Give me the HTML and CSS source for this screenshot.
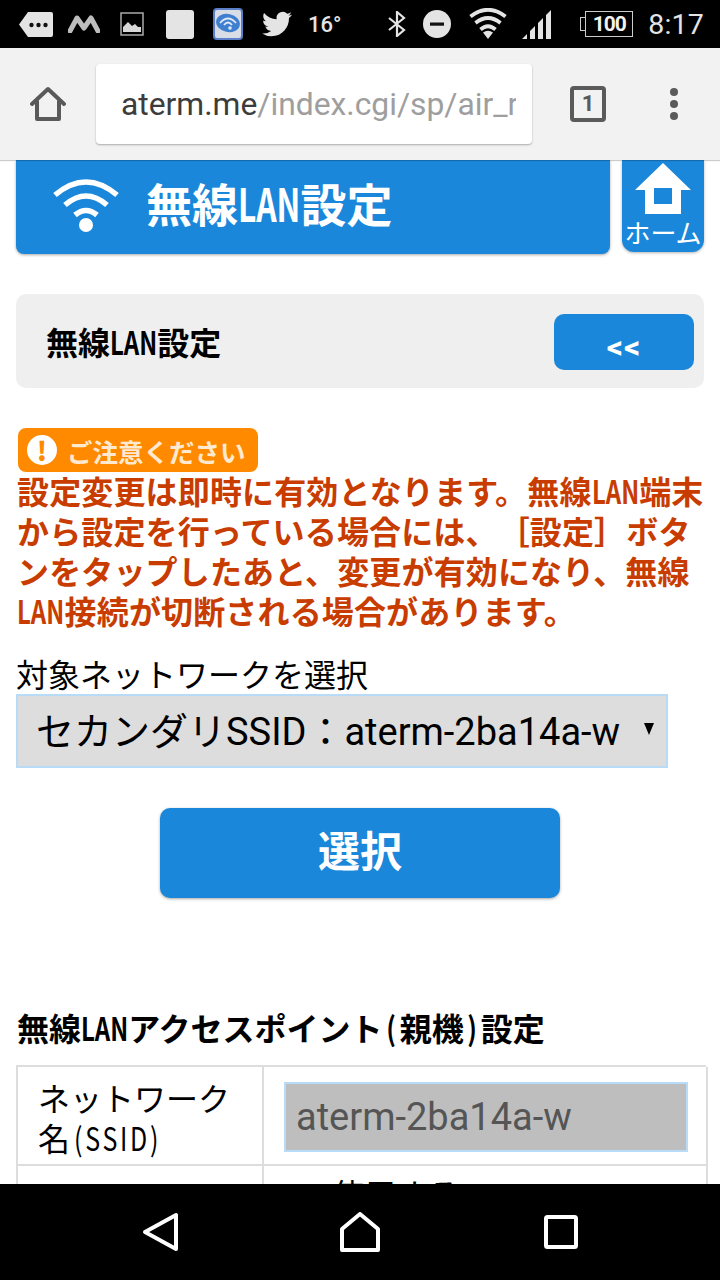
FILE: index.html
```html
<!DOCTYPE html>
<html lang="ja">
<head>
<meta charset="utf-8">
<title>無線LAN設定</title>
<link rel="stylesheet" href="styles.css">
</head>
<body>
<div class="device">
  <header class="status">
    <div class="status-left">
      <svg class="i-more" viewBox="0 0 34 25"><path d="M9 0H32a2 2 0 0 1 2 2V23a2 2 0 0 1-2 2H9L0 12.500Z" fill="#e4e4e4"/><circle cx="12.500" cy="13" r="2.200" fill="#111"/><circle cx="19.500" cy="13" r="2.200" fill="#111"/><circle cx="26.500" cy="13" r="2.200" fill="#111"/></svg>
      <svg class="i-m" viewBox="0 0 32 18"><path d="M2 16 L9 3 L16 13 L23 3 L30 16" fill="none" stroke="#bdbdbd" stroke-width="5" stroke-linejoin="round" stroke-linecap="round"/></svg>
      <svg class="i-pic" viewBox="0 0 24 24"><rect x="1" y="1" width="22" height="22" fill="none" stroke="#aaa" stroke-width="1.500"/><path d="M3 20V15L8 10L12 14L15 12L18 15L21 15V20Z" fill="#d8d8d8"/></svg>
      <div class="i-blank"></div>
      <svg class="i-app" viewBox="0 0 30 32"><rect x="1" y="1" width="28" height="30" rx="3" fill="#d8dde6" stroke="#5b7fc8" stroke-width="2"/><ellipse cx="15" cy="15" rx="12" ry="9" transform="rotate(12 15 15)" fill="#3f7fd0"/><path d="M7 15Q15 6 23 15M11 17Q15 12 19 17" fill="none" stroke="#dfe9f6" stroke-width="1.800"/><circle cx="17" cy="20" r="1.800" fill="#dfe9f6"/></svg>
      <svg class="i-tw" viewBox="0 0 24 24"><path fill="#e4e4e4" d="M23.950 4.570a10 10 0 0 1-2.820.78 4.960 4.960 0 0 0 2.160-2.720c-.95.55-2 .95-3.120 1.180a4.920 4.920 0 0 0-8.380 4.480C7.690 8.090 4.070 6.130 1.640 3.160a4.820 4.820 0 0 0-.66 2.480c0 1.710.87 3.210 2.190 4.100a4.900 4.900 0 0 1-2.230-.62v.06a4.920 4.920 0 0 0 3.950 4.830 5 5 0 0 1-2.210.08 4.940 4.940 0 0 0 4.600 3.420 9.870 9.870 0 0 1-6.100 2.100c-.39 0-.78-.02-1.170-.07a14 14 0 0 0 7.560 2.210c9.050 0 14-7.500 14-13.980 0-.21 0-.42-.02-.63a9.940 9.940 0 0 0 2.460-2.550z"/></svg>
      <span class="temp">16°</span>
    </div>
    <div class="status-right">
      <svg class="i-bt" viewBox="0 0 18 26"><path d="M1 7L16 19L9 25V1L16 7L1 19" fill="none" stroke="#e4e4e4" stroke-width="2.200"/></svg>
      <svg class="i-dnd" viewBox="0 0 28 28"><circle cx="14" cy="14" r="14" fill="#e4e4e4"/><rect x="7" y="12.500" width="14" height="3.200" fill="#111"/></svg>
      <svg class="i-wifi" viewBox="0 0 38 32"><path d="M1.500 8.500Q19 -5 36.500 8.500M6.500 15Q19 5 31.500 15M11.500 21.500Q19 15 26.500 21.500" fill="none" stroke="#e4e4e4" stroke-width="3.800"/><path d="M19 31L14 24.500Q19 21 24 24.500Z" fill="#e4e4e4"/></svg>
      <svg class="i-sig" viewBox="0 0 30 30"><path d="M1 30L6 25V30ZM9 30V22L14 17V30ZM17 30V14L22 9V30ZM25 30V6L30 1V30Z" fill="#e4e4e4"/></svg>
      <div class="battery"><span class="bat-tip"></span><span class="bat-body">100</span></div>
      <span class="clock">8:17</span>
    </div>
  </header>

  <nav class="toolbar">
    <svg class="i-home" viewBox="0 0 36 36"><path d="M2 18L18 3L34 18M7 15V33H29V15" fill="none" stroke="#5a5a5a" stroke-width="4" stroke-linejoin="round" stroke-linecap="round"/></svg>
    <div class="url"><div class="url-text"><span class="url-host">aterm.me</span>/index.cgi/sp/air_router.cgi</div></div>
    <div class="tabs">1</div>
    <div class="menu"><i></i><i></i><i></i></div>
  </nav>

  <main class="content">
    <div class="top-row">
      <div class="banner">
        <svg class="i-banner-wifi" viewBox="0 0 68 54"><path d="M3 17Q34 -9 65 17M13 27Q34 9 55 27M23 37Q34 28 45 37" fill="none" stroke="#fff" stroke-width="5.500"/><ellipse cx="34" cy="47" rx="7" ry="7" fill="#fff"/></svg>
        <h1 class="banner-title">無線<span class="nar nar-big">LAN</span>設定</h1>
      </div>
      <div class="home-btn">
        <svg class="i-home-solid" viewBox="0 0 56 52"><path fill-rule="evenodd" fill="#fff" d="M28 0L56 27H46V51H10V27H0ZM19 25V41H37V25Z"/></svg>
        <span>ホーム</span>
      </div>
    </div>

    <section class="panel">
      <h2 class="panel-title">無線<span class="nar">LAN</span>設定</h2>
      <div class="back-btn">&lt;&lt;</div>
    </section>

    <div class="badge"><span class="badge-mark">!</span><span class="badge-text">ご注意ください</span></div>
    <p class="warning">設定変更は即時に有効となります。無線<span class="nar">LAN</span>端末から設定を行っている場合には、［設定］ボタンをタップしたあと、変更が有効になり、無線<span class="nar">LAN</span>接続が切断される場合があります。</p>

    <label class="field-label">対象ネットワークを選択</label>
    <div class="select"><span class="select-text">セカンダリSSID：aterm-2ba14a-w</span><span class="select-arrow"></span></div>

    <div class="submit-row"><div class="submit">選択</div></div>

    <h3 class="section-title">無線<span class="nar">LAN</span>アクセスポイント<span class="paren">(</span>親機<span class="paren">)</span>設定</h3>
    <div class="table">
      <div class="cell th">ネットワーク名<span class="nar-reg">(SSID)</span></div>
      <div class="cell td"><div class="input">aterm-2ba14a-w</div></div>
      <div class="cell th"></div>
      <div class="cell td use">使用する</div>
    </div>
  </main>

  <footer class="navbar">
    <svg class="i-back" viewBox="0 0 36 40"><path d="M34 3V37L3 20Z" fill="none" stroke="#fff" stroke-width="4" stroke-linejoin="round"/></svg>
    <svg class="i-navhome" viewBox="0 0 40 40"><path d="M2 17L20 2L38 17V38H2Z" fill="none" stroke="#fff" stroke-width="4" stroke-linejoin="round"/></svg>
    <svg class="i-recent" viewBox="0 0 36 36"><rect x="3" y="3" width="30" height="30" rx="1.500" fill="none" stroke="#fff" stroke-width="4"/></svg>
  </footer>
</div>
</body>
</html>
```
FILE: styles.css
```css
* { box-sizing: border-box; }
html, body { margin: 0; padding: 0; background: #000; }
body { font-family: Roboto, "Noto Sans CJK JP", sans-serif; color: #000; text-spacing-trim: space-all; }
h1, h2, h3, p { margin: 0; font-weight: 700; }

.device { width: 720px; height: 1280px; display: flex; flex-direction: column; overflow: hidden; background: #fff; }

/* status bar */
.status { height: 48px; flex: none; background: #000; display: flex; justify-content: space-between; align-items: center; color: #e4e4e4; }
.status-left { display: flex; align-items: center; padding-left: 19px; }
.status-right { display: flex; align-items: center; padding-right: 16px; }
.i-more { width: 34px; height: 25px; margin-right: 15px; }
.i-m { width: 32px; height: 18px; margin-right: 20px; }
.i-pic { width: 24px; height: 24px; margin-right: 22px; }
.i-blank { width: 28px; height: 29px; background: #e4e4e4; border-radius: 3px; margin-right: 19px; }
.i-app { width: 30px; height: 32px; margin-right: 19px; }
.i-tw { width: 30px; height: 30px; margin-right: 16px; }
.temp { font-size: 22px; font-weight: 500; }
.i-bt { width: 18px; height: 26px; margin-right: 17px; }
.i-dnd { width: 28px; height: 28px; margin-right: 18px; }
.i-wifi { width: 38px; height: 32px; margin-right: 14px; }
.i-sig { width: 30px; height: 30px; margin-right: 29px; }
.battery { display: flex; align-items: center; width: 53px; height: 26px; margin-right: 15px; }
.bat-tip { width: 5px; height: 14px; border: 1px solid #ccc; border-right: 0; }
.bat-body { flex: 1; height: 26px; border: 1px solid #ccc; font-size: 21px; line-height: 24px; font-weight: 700; text-align: center; color: #f2f2f2; letter-spacing: -1px; }
.clock { font-size: 28.500px; letter-spacing: .2px; }

/* toolbar */
.toolbar { height: 112px; flex: none; background: #f2f2f2; display: flex; align-items: center; padding-left: 30px; position: relative; z-index: 2; box-shadow: 0 1px 1px rgba(0,0,0,.2); }
.i-home { width: 36px; height: 36px; margin-right: 30px; }
.url { width: 436px; height: 80px; background: #fff; border-radius: 4px; box-shadow: 0 1px 2px rgba(0,0,0,.3); padding: 0 16px 0 25px; margin-right: 38px; }
.url-text { font-size: 31.800px; line-height: 80px; color: #9e9e9e; white-space: nowrap; overflow: hidden; }
.url-host { color: #3c3c3c; }
.tabs { width: 36px; height: 36px; border: 4px solid #5a5a5a; border-radius: 4px; color: #5a5a5a; font-size: 22px; font-weight: 700; line-height: 28px; text-align: center; margin-right: 64px; }
.menu { display: flex; flex-direction: column; gap: 4px; }
.menu i { display: block; width: 8px; height: 8px; border-radius: 50%; background: #5a5a5a; }

/* content */
.content { flex: 1; min-height: 0; overflow: hidden; padding: 0 16px; background: #fff; font-family: "Noto Sans CJK JP", sans-serif; }
.nar { display: inline-block; line-height: 1; transform: scaleX(.75); transform-origin: 0 50%; margin-right: -.49em; }
.nar-big { transform: scaleX(.69); margin-right: -.607em; }
.top-row { display: flex; gap: 12px; align-items: flex-start; }
.banner { width: 594px; height: 94px; background: #1a87da; border-radius: 0 0 8px 8px; box-shadow: 0 1px 3px rgba(0,0,0,.35); display: flex; align-items: center; padding-left: 36px; color: #fff; }
.i-banner-wifi { width: 68px; height: 54px; margin: -4px 26px 0 0; flex: none; }
.banner-title { font-size: 46px; line-height: 90px; margin-top: -10px; white-space: nowrap; }
.home-btn { width: 82px; height: 92px; background: #1a87da; border-radius: 0 0 12px 12px; box-shadow: 0 1px 3px rgba(0,0,0,.3); display: flex; flex-direction: column; align-items: center; padding-top: 3px; color: #fff; }
.i-home-solid { width: 56px; height: 52px; flex: none; }
.home-btn span { font-size: 26px; line-height: 34px; white-space: nowrap; }

.panel { margin-top: 40px; height: 94px; background: #efefef; border-radius: 10px; display: flex; justify-content: space-between; align-items: center; padding: 0 10px 0 30px; }
.panel-title { font-size: 32px; }
.back-btn { width: 140px; height: 56px; margin-top: 2px; background: #1a87da; border-radius: 10px; color: #fff; font-family: Roboto, sans-serif; font-size: 32px; font-weight: 700; letter-spacing: 1px; text-align: center; line-height: 66px; }

.badge { margin: 40px 0 0 2px; width: 240px; height: 44px; background: #ff8a00; border-radius: 8px; display: flex; align-items: center; padding-left: 9px; color: #fff; }
.badge-mark { width: 30px; height: 30px; border-radius: 50%; background: #fff; color: #ff8a00; font-size: 26px; font-weight: 900; line-height: 30px; text-align: center; margin-right: 10px; flex: none; }
.badge-text { font-size: 25.500px; font-weight: 700; color: #ffe9d0; white-space: nowrap; }
.warning { color: #c83c00; font-size: 32px; line-height: 40px; letter-spacing: .15px; padding-left: 1px; margin-top: -2px; }

.field-label { display: block; font-size: 32px; line-height: 40px; margin-top: 23px; }
.select { width: 652px; height: 74px; margin-top: 1px; background: #ddd; border: 2px solid #b8dcf8; display: flex; align-items: center; justify-content: space-between; padding: 0 12px 6px 18px; font-family: Roboto, "Noto Sans CJK JP", sans-serif; }
.select-text { font-size: 38px; white-space: nowrap; }
.select-arrow { width: 0; height: 0; border-left: 5.500px solid transparent; border-right: 5.500px solid transparent; border-top: 12px solid #000; margin-top: 2px; flex: none; }

.submit-row { display: flex; justify-content: center; margin-top: 40px; }
.submit { width: 400px; height: 90px; background: #1a87da; border-radius: 10px; box-shadow: 0 1px 3px rgba(0,0,0,.35); color: #fff; font-size: 42px; font-weight: 700; line-height: 82px; text-align: center; }

.section-title { margin-top: 107px; font-size: 32px; line-height: 44px; padding-left: 1px; white-space: nowrap; }
.paren { display: inline-block; transform: scaleX(.8); margin: 0 2.500px; }
.table { margin-top: 16px; width: 690px; display: grid; grid-template-columns: 246px 444px; border-top: 2px solid #ddd; border-left: 2px solid #ddd; }
.cell { border-right: 2px solid #ddd; border-bottom: 2px solid #ddd; }
.th { padding: 10px 20px 0 20px; font-size: 32px; line-height: 40px; height: 99px; }
.nar-reg { display: inline-block; line-height: 1; transform: scaleX(.78); transform-origin: 0 50%; margin: 0 -30px 0 4px; letter-spacing: 3.500px; }
.td { padding: 15px 16px 0 20px; }
.input { width: 404px; height: 70px; background: #bebebe; border: 2px solid #b8dcf8; color: #555; font-family: Roboto, sans-serif; font-size: 38px; line-height: 66px; padding-left: 10px; }
.use { font-size: 32px; line-height: 40px; padding-top: 7px; padding-left: 68px; }

/* nav bar */
.navbar { height: 96px; flex: none; background: #000; position: relative; z-index: 2; display: flex; align-items: center; padding-left: 142px; }
.i-back { width: 36px; height: 40px; margin-right: 162px; }
.i-navhome { width: 40px; height: 40px; margin-right: 163px; }
.i-recent { width: 36px; height: 36px; }
```
